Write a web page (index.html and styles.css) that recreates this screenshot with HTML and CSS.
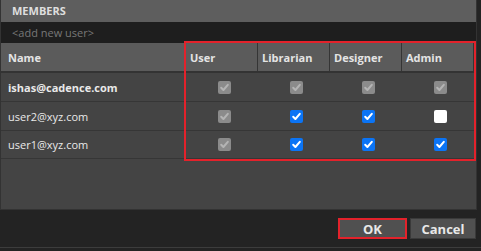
FILE: index.html
```html
<!DOCTYPE html>
<html lang="en">
<head>
  <meta charset="UTF-8">
  <title>Members</title>
  <link rel="stylesheet" href="styles.css">
</head>
<body>
  <!-- Panel de miembros -->
  <div class="panel">
    <div class="titulo">MEMBERS</div>
    <div class="nuevo">&lt;add new user&gt;</div>
    <div class="tabla">
      <div class="nombres">
        <div class="cab">Name</div>
        <div class="celda fuerte">ishas@cadence.com</div>
        <div class="celda">user2@xyz.com</div>
        <div class="celda">user1@xyz.com</div>
      </div>
      <!-- Roles, con marco rojo -->
      <div class="roles">
        <div class="cab">User</div>
        <div class="cab">Librarian</div>
        <div class="cab">Designer</div>
        <div class="cab">Admin</div>

        <div class="celda"><span class="caja gris"><svg viewBox="0 0 13 13"><path d="M3.2 6.8 5.4 9 9.8 3.8"/></svg></span></div>
        <div class="celda"><span class="caja gris"><svg viewBox="0 0 13 13"><path d="M3.2 6.8 5.4 9 9.8 3.8"/></svg></span></div>
        <div class="celda"><span class="caja gris"><svg viewBox="0 0 13 13"><path d="M3.2 6.8 5.4 9 9.8 3.8"/></svg></span></div>
        <div class="celda"><span class="caja gris"><svg viewBox="0 0 13 13"><path d="M3.2 6.8 5.4 9 9.8 3.8"/></svg></span></div>

        <div class="celda"><span class="caja gris"><svg viewBox="0 0 13 13"><path d="M3.2 6.8 5.4 9 9.8 3.8"/></svg></span></div>
        <div class="celda"><span class="caja azul"><svg viewBox="0 0 13 13"><path d="M3.2 6.8 5.4 9 9.8 3.8"/></svg></span></div>
        <div class="celda"><span class="caja azul"><svg viewBox="0 0 13 13"><path d="M3.2 6.8 5.4 9 9.8 3.8"/></svg></span></div>
        <div class="celda"><span class="caja blanca"></span></div>

        <div class="celda"><span class="caja gris"><svg viewBox="0 0 13 13"><path d="M3.2 6.8 5.4 9 9.8 3.8"/></svg></span></div>
        <div class="celda"><span class="caja azul"><svg viewBox="0 0 13 13"><path d="M3.2 6.8 5.4 9 9.8 3.8"/></svg></span></div>
        <div class="celda"><span class="caja azul"><svg viewBox="0 0 13 13"><path d="M3.2 6.8 5.4 9 9.8 3.8"/></svg></span></div>
        <div class="celda"><span class="caja azul"><svg viewBox="0 0 13 13"><path d="M3.2 6.8 5.4 9 9.8 3.8"/></svg></span></div>
      </div>
    </div>
  </div>

  <!-- Botones -->
  <div class="pie">
    <button class="boton ok">OK</button>
    <button class="boton">Cancel</button>
  </div>
</body>
</html>
```

FILE: styles.css
```css
/* Reset básico */
* {
  margin: 0;
  padding: 0;
  box-sizing: border-box;
}
body {
  font-family: "Open Sans", "Noto Sans", sans-serif;
  font-size: 11px;
  background-color: #232323;
  color: #e9e9e9;
  width: 481px;
  height: 251px;
  overflow: hidden;
}
/* Panel principal */
.panel {
  width: 477px;
  height: 210px;
  background: #444;
  border: 1px solid #333;
  border-top: none;
}
.titulo {
  height: 22px;
  line-height: 22px;
  padding-left: 11px;
  background: #5e5e5e;
  font-weight: bold;
  color: #dedede;
}
.nuevo {
  height: 21px;
  line-height: 21px;
  padding-left: 11px;
  background: #1e1e1e;
  color: #787878;
}
/* Tabla de permisos */
.tabla {
  display: flex;
}
.nombres {
  width: 185px;
  display: grid;
  grid-template-rows: 30px 29px 29px 28px;
}
.roles {
  width: 288px;
  display: grid;
  grid-template-columns: repeat(4, 72px);
  grid-template-rows: 30px 29px 29px 28px;
  outline: 2px solid #e3222b;
}
.cab {
  background: #5b5b5b;
  border-right: 1px solid #353535;
  border-bottom: 2px solid #333;
  font-weight: bold;
  color: #e4e4e4;
  display: flex;
  align-items: center;
  padding-left: 4px;
}
.nombres .cab {
  padding-left: 7px;
}
.roles .cab:last-of-type {
  border-right: none;
}
.celda {
  border-bottom: 1px solid #363636;
  display: flex;
  align-items: center;
  justify-content: center;
  padding-left: 4px;
}
.nombres .celda {
  justify-content: flex-start;
  padding-left: 7px;
}
.fuerte {
  font-weight: bold;
}
.caja {
  width: 13px;
  height: 13px;
  border-radius: 2px;
  display: block;
}
.caja svg {
  display: block;
  width: 13px;
  height: 13px;
  fill: none;
  stroke-width: 2;
  stroke-linecap: round;
  stroke-linejoin: round;
}
.gris {
  background: #8b8b8b;
}
.gris svg {
  stroke: #b4b4b4;
}
.azul {
  background: #0b74f5;
}
.azul svg {
  stroke: #fff;
}
.blanca {
  background: #fff;
}
/* Pie con botones */
.pie {
  display: flex;
  justify-content: flex-end;
  gap: 3px;
  padding: 8px 5px 0 0;
  height: 38px;
  border-bottom: 1px solid #3c3c3c;
}
.boton {
  font-family: "Open Sans", "Noto Sans", sans-serif;
  font-size: 13px;
  font-weight: bold;
  color: #e8e8e8;
  background: #505050;
  border: 1px solid #3a3a3a;
  height: 21px;
  width: 66px;
}
.ok {
  width: 69px;
  border: 2px solid #e3222b;
}
```
